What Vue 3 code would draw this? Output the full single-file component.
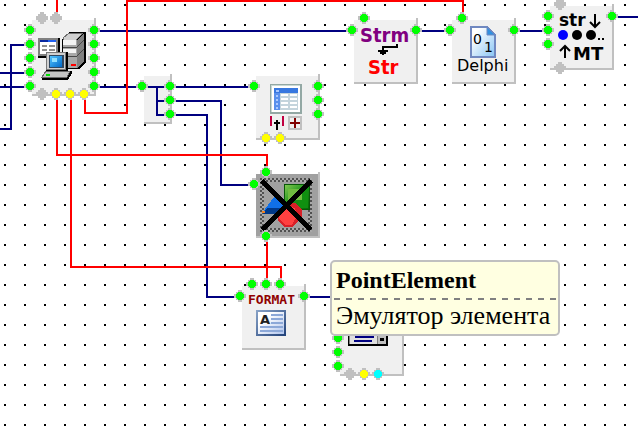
<script setup>
const GREEN = '#00ff00'
const GRAY = '#c0c0c0'
const YELLOW = '#ffff00'
const CYAN = '#00ffff'

const ports = (color, list) => list.map(([x, y]) => ({ x, y, color }))

const nodes = [
  {
    id: 'server', x: 32, y: 20, w: 62, h: 74,
    ports: [
      ...ports(GREEN, [[-2, 10], [-2, 24], [-2, 38], [-2, 52], [-2, 66], [62, 10], [62, 24], [62, 38], [62, 52], [62, 66]]),
      ...ports(GRAY, [[10, -2], [24, -2], [10, 74]]),
      ...ports(YELLOW, [[24, 74], [38, 74], [52, 74]])
    ]
  },
  { id: 'hub', x: 144, y: 76, w: 26, h: 46, ports: ports(GREEN, [[-2, 10], [26, 10], [26, 24], [26, 38]]) },
  {
    id: 'table', x: 256, y: 76, w: 62, h: 62,
    ports: [...ports(GREEN, [[-2, 10], [62, 10], [62, 24], [62, 38]]), ...ports(YELLOW, [[10, 62], [24, 62]])]
  },
  { id: 'strm', x: 354, y: 20, w: 62, h: 62, ports: ports(GREEN, [[-2, 10], [62, 10], [10, -2]]) },
  { id: 'delphi', x: 452, y: 20, w: 62, h: 62, ports: ports(GREEN, [[-2, 10], [62, 10], [10, -2]]) },
  {
    id: 'multi', x: 550, y: 6, w: 62, h: 62,
    ports: [...ports(GREEN, [[-2, 10], [-2, 24], [-2, 38], [62, 10]]), ...ports(GRAY, [[10, -2], [10, 62]])]
  },
  { id: 'shapes', x: 256, y: 174, w: 62, h: 62, fill: '#a0a0a0', ports: ports(GREEN, [[-2, 10], [10, -2], [10, 62]]) },
  { id: 'format', x: 242, y: 286, w: 62, h: 62, ports: ports(GREEN, [[-2, 10], [62, 10], [10, -2], [24, -2], [38, -2]]) },
  {
    id: 'combo', x: 340, y: 312, w: 62, h: 62,
    ports: [...ports(GREEN, [[-2, 26], [-2, 40], [-2, 54]]), ...ports(GRAY, [[10, 62]]), ...ports(YELLOW, [[24, 62]]), ...ports(CYAN, [[38, 62]])]
  }
]

const dataWires = [
  'M100 31H346', 'M422 31H444', 'M520 31H542', 'M618 17H4000',
  'M0 129H11V45H24', 'M0 73H24', 'M0 87H24', 'M100 87H136',
  'M176 87H248', 'M176 101H221V185H248', 'M176 115H207V297H234', 'M310 297H332'
]
const eventWires = [
  'M57 0V12', 'M57 100V155H267V166', 'M71 100V267H281V278',
  'M85 100V113H127V1H463V12', 'M267 242V278'
]
</script>

<template>
  <main class="canvas">
    <svg class="scene" role="img" aria-label="Scheme editor">
      <defs>
        <pattern id="grid" width="20" height="20" patternUnits="userSpaceOnUse">
          <rect x="4" y="4" width="2" height="2" />
        </pattern>
        <pattern id="check" width="4" height="4" patternUnits="userSpaceOnUse">
          <rect width="4" height="4" fill="#a8a8a8" />
          <path d="M0 0h2v2h-2zM2 2h2v2h-2z" fill="#505050" />
        </pattern>
        <linearGradient id="screen" x2="1" y2="1">
          <stop stop-color="#52c4ff" /><stop offset="1" stop-color="#0068c8" />
        </linearGradient>
        <linearGradient id="paper" x2="1" y2="1">
          <stop offset=".2" stop-color="#fff" /><stop offset="1" stop-color="#86c4f4" />
        </linearGradient>
        <linearGradient id="frame" x2="1" y2="1">
          <stop stop-color="#8aa4c8" /><stop offset="1" stop-color="#204078" />
        </linearGradient>
        <linearGradient id="sheet" x2="1" y2="1">
          <stop offset=".3" stop-color="#fff" /><stop offset="1" stop-color="#b0c4ec" />
        </linearGradient>
        <linearGradient id="leaf" x2="1" y2="1">
          <stop stop-color="#80c850" /><stop offset=".5" stop-color="#189018" /><stop offset="1" stop-color="#086808" />
        </linearGradient>
      </defs>
      <rect width="100%" height="100%" fill="url(#grid)" />
      <path v-for="d in dataWires" :key="d" :d="d" class="wire data" />
      <path v-for="d in eventWires" :key="d" :d="d" class="wire event" />

      <g v-for="n in nodes" :key="n.id" :transform="`translate(${n.x} ${n.y})`">
        <rect :width="n.w" :height="n.h" :fill="n.fill || '#f0f0f0'" />
        <path :d="`M0 ${n.h + 1}H${n.w + 1}V-2`" class="edge" />

        <g v-if="n.id === 'server'" class="crisp">
          <path d="M37 12H54V42L48 49H30V19z" fill="#000" />
          <path d="M37 13H51L44 20H31V18z" fill="#d0d0d0" stroke="#707070" />
          <path d="M45 20L52 13V41L45 48z" fill="#808080" />
          <path d="M31 20H45V48H31z" fill="#a8a8a8" />
          <path d="M31 20H44V25H31zM31 29H44V33H31z" fill="#f4f4f4" />
          <path d="M31 27H45L52 20M31 36H45L52 29" fill="none" stroke="#484848" />
          <path d="M39 44h5v2h-5z" fill="#f00" />
          <path d="M6 18H28V38H6z" fill="#000" />
          <path d="M6 18H26V36H6z" fill="#808080" />
          <path d="M8 20H24V34H8z" fill="#fff" />
          <path d="M8 20H16V22H8z" fill="#0828a0" />
          <path d="M16 20H24V22H16z" fill="#2060f0" />
          <path d="M10 25h5v2h-5zM17 25h6v2h-6zM10 29h5v2h-5zM17 29h6v2h-6z" fill="#909090" />
          <path d="M14 32H36V52H14z" fill="#000" />
          <path d="M14 32H34V50H14z" fill="#787878" />
          <path d="M15 33H33V49H15z" fill="#d0d0d0" />
          <path d="M17 35H32V48H17z" fill="#304860" />
          <path d="M18 36H30V47H18z" fill="url(#screen)" />
          <path d="M20 38h5v4h-5z" fill="#90e0ff" />
          <path d="M14 51H40V53L36 60H10V57z" fill="#000" />
          <path d="M14 51H38L35 57H10z" fill="#c4c4c4" stroke="#686868" />
          <path d="M14 54h4v2h-4z" fill="#00e000" />
        </g>

        <path v-else-if="n.id === 'hub'" d="M4 11H22M13 10V40M13 25H22M13 39H22" class="wire data" />

        <g v-else-if="n.id === 'table'" class="crisp">
          <rect x="14" y="8" width="32" height="30" fill="#93a8a4" />
          <rect x="15" y="9" width="29" height="27" fill="#c8d8d4" />
          <rect x="16" y="10" width="28" height="26" fill="#fff" />
          <path d="M18 12H42V34H18z" fill="#c4d4dc" />
          <path d="M18 12H42V17H18z" fill="#3878e0" />
          <path d="M18 17H24V34H18z" fill="#5890ec" />
          <path d="M20 14h3v2h-3zM20 19h2v2h-2zM20 23h2v2h-2zM20 27h2v2h-2zM20 31h2v2h-2z" fill="#a8c8ff" />
          <path d="M25 18h7v2h-7zM34 18h7v2h-7zM25 22h7v2h-7zM34 22h7v2h-7zM25 26h7v2h-7zM34 26h7v2h-7zM25 30h7v2h-7zM34 30h7v2h-7z" fill="#fff" />
          <path d="M14 40h2v10h-2zM26 40h2v10h-2z" fill="#c00040" />
          <path d="M20 44h2v2h2v2h-2v6h-2v-6h-2v-2h2z" fill="#000" />
          <rect x="33" y="41" width="12" height="12" fill="#f0f0f0" stroke="#c0c0c0" stroke-width="2" />
          <path d="M34 47H44M39 42V52" stroke="#800000" stroke-width="2" />
        </g>

        <g v-else-if="n.id === 'strm'">
          <text x="6" y="22" class="strm" fill="#800080">Strm</text>
          <path d="M43 24v3h-14v3" fill="none" stroke="#000" stroke-width="2" class="crisp" />
          <path d="M24 30h10v2h-2v2h-2v1h-2v-1h-2v-2h-2z" fill="#000" class="crisp" />
          <text x="14" y="54" class="strm" fill="#ff0000">Str</text>
        </g>

        <g v-else-if="n.id === 'delphi'">
          <path d="M19 7H35L43 15V37H19z" fill="url(#paper)" stroke="#7088c0" stroke-width="2" class="crisp" />
          <path d="M35 7V15H43z" fill="#3090e0" stroke="#7088c0" />
          <text x="21" y="24" class="digit">0</text>
          <text x="32" y="32" class="digit">1</text>
          <text x="5" y="51" class="delphi">Delphi</text>
        </g>

        <g v-else-if="n.id === 'multi'">
          <text x="9" y="20" class="str">str</text>
          <path d="M45 8V21M40 16L45 21L50 16" class="arrow" />
          <circle cx="13" cy="29" r="5" fill="#0000ff" />
          <circle cx="27" cy="29" r="5" />
          <circle cx="41" cy="29" r="5" />
          <path d="M48 32h2v2h-2zM52 32h2v2h-2z" />
          <path d="M15 52V40M10 45L15 40L20 45" class="arrow" />
          <text x="23" y="54" class="mt">MT</text>
        </g>

        <g v-else-if="n.id === 'shapes'" class="crisp">
          <rect x="6" y="6" width="48" height="50" fill="none" stroke="url(#check)" stroke-width="4" />
          <path d="M28 10H54V36H28z" fill="#085808" />
          <path d="M29 11H53V35H29z" fill="url(#leaf)" />
          <path d="M32 15H46V26H32z" fill="#70bc40" />
          <path d="M46 15H52V34H42V26H46z" fill="#109010" />
          <path d="M18 23L29 31L23 40L6 39z" fill="#1070e8" />
          <path d="M6 39L12 34H25L22 40H7z" fill="#003888" />
          <path d="M6 37h3v2h-3z" fill="#f08020" />
          <path d="M30 29H40L46 36V43L37 53H29L22 47V38z" fill="#d82028" />
          <path d="M30 32L39 34L41 42L36 51H29L23 45L24 38z" fill="#ff4040" />
          <path d="M6 7L55 56M55 7L6 56" stroke="#000" stroke-width="5" />
        </g>

        <g v-else-if="n.id === 'format'">
          <text x="6" y="18" class="format">FORMAT</text>
          <g class="crisp">
            <rect x="14" y="24" width="30" height="26" fill="url(#frame)" />
            <rect x="16" y="26" width="26" height="22" fill="url(#sheet)" />
            <path d="M29 29H41M29 33H41M29 37H41M18 41H41M18 45H41" stroke="#8ca8d8" stroke-width="2" />
          </g>
          <text x="18" y="38" class="letter">A</text>
        </g>

        <g v-else class="crisp">
          <path d="M8 12H48V34H8z" fill="#000" />
          <path d="M9 12H46V32H9z" fill="#808080" />
          <path d="M10 12H37V32H10z" fill="#e0e0e0" />
          <path d="M15 25H34M14 29H32" stroke="#000080" stroke-width="2" />
          <path d="M38 22H46V32H38z" fill="#c0c0c0" />
          <path d="M40 26h4v3h-4z" fill="#000" />
        </g>

        <g v-for="p in n.ports" :key="`${p.x}:${p.y}`" :transform="`translate(${p.x} ${p.y})`" class="crisp">
          <path d="M-2-6H2V-4H4V-2H6V2H4V4H2V6H-2V4H-4V2H-6V-2H-4V-4H-2z" fill="#c0c0c0" />
          <path d="M-2-4H2V-3H3V-2H4V2H3V3H2V4H-2V3H-3V2H-4V-2H-3V-3H-2z" :fill="p.color" />
        </g>
      </g>
    </svg>

    <aside class="tip" role="tooltip">
      <strong class="tip-title">PointElement</strong>
      <svg class="tip-rule" aria-hidden="true"><path d="M0 1H4000" /></svg>
      <span class="tip-text">Эмулятор элемента</span>
    </aside>
  </main>
</template>

<style>
body {
  background: #fff;
}
</style>

<style scoped>
.canvas {
  position: relative;
  min-height: 100vh;
  overflow: hidden;
  display: grid;
}
.scene {
  display: block;
  width: 100%;
  height: 100%;
}
.crisp,
.wire,
.edge {
  shape-rendering: crispEdges;
}
.wire {
  fill: none;
  stroke-width: 2px;
}
.data {
  stroke: #000080;
}
.event {
  stroke: #ff0000;
}
.edge {
  fill: none;
  stroke: #c0c0c0;
  stroke-width: 2px;
}
.arrow {
  fill: none;
  stroke: #000;
  stroke-width: 2px;
}
.strm {
  font: bold 20px "DejaVu Sans Condensed", "DejaVu Sans", sans-serif;
}
.delphi {
  font: 16px "DejaVu Sans", sans-serif;
}
.digit {
  font: 14px "DejaVu Sans", sans-serif;
}
.str {
  font: bold 17px "DejaVu Sans", sans-serif;
}
.mt {
  font: bold 18px "DejaVu Sans", sans-serif;
}
.format {
  font: bold 13px "DejaVu Sans Mono", monospace;
  fill: #900000;
}
.letter {
  font: bold 13px "DejaVu Sans", sans-serif;
  fill: #202020;
}
.tip {
  position: absolute;
  left: 330px;
  top: 260px;
  display: flex;
  flex-direction: column;
  padding: 2px;
  border: 2px solid #c0c0c0;
  border-radius: 5px;
  background: #ffffe1;
  color: #000;
  font-family: "Liberation Serif", serif;
  line-height: 32px;
  white-space: nowrap;
}
.tip-title {
  padding: 0 2px 2px;
  font-size: 24px;
}
.tip-text {
  padding: 0 6px 0 2px;
  font-size: 26px;
}
.tip-rule {
  width: 0;
  min-width: 100%;
  height: 2px;
}
.tip-rule path {
  stroke: #808080;
  stroke-width: 2px;
  stroke-dasharray: 6 6;
}
</style>
